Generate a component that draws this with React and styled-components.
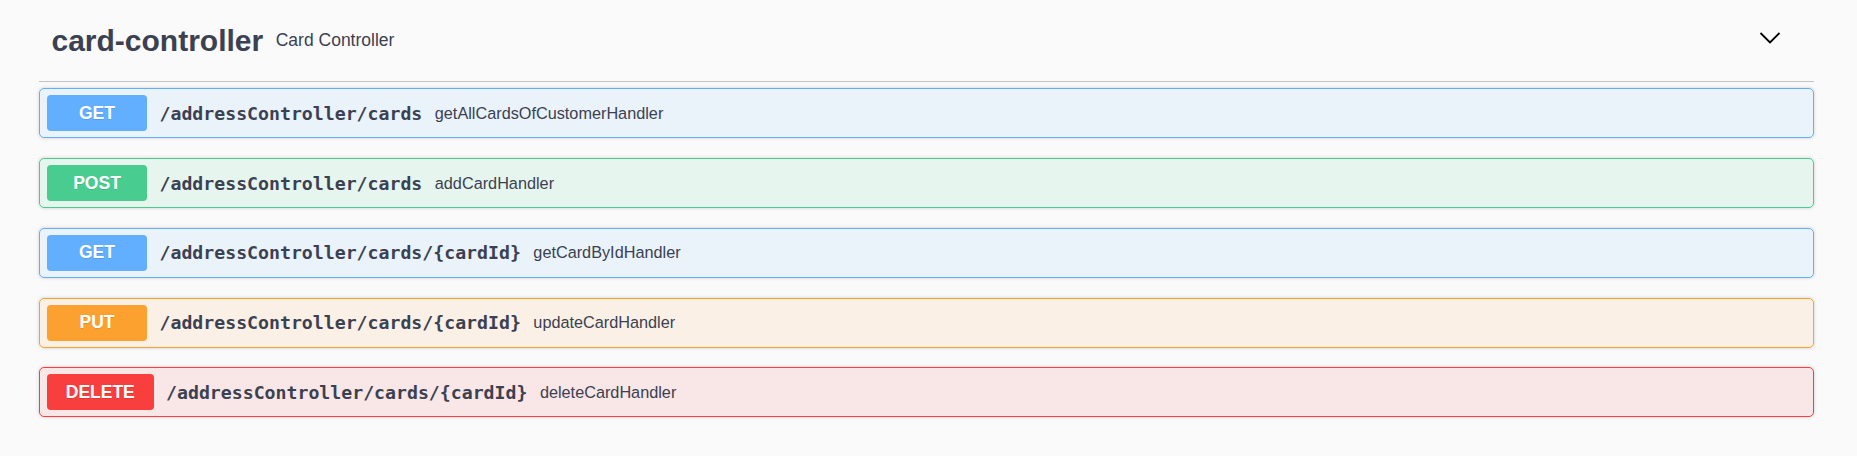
import React from 'react';
import styled, { createGlobalStyle } from 'styled-components';

const GlobalStyle = createGlobalStyle`
  html, body {
    margin: 0;
    padding: 0;
    background: #fafafa;
  }
  body {
    font-family: "Liberation Sans", Arial, sans-serif;
    color: #3b4151;
  }
`;

const METHODS = {
  get: { color: '#61affe', bg: 'rgba(97, 175, 254, 0.1)' },
  post: { color: '#49cc90', bg: 'rgba(73, 204, 144, 0.1)' },
  put: { color: '#fca130', bg: 'rgba(252, 161, 48, 0.1)' },
  delete: { color: '#f93e3e', bg: 'rgba(249, 62, 62, 0.1)' },
};

const Section = styled.section`
  padding: 0 43px 0 39px;
`;

const TagHeader = styled.h3`
  display: flex;
  align-items: center;
  box-sizing: border-box;
  height: 82px;
  margin: 0 0 6.25px;
  padding: 0 32px 0 12.5px;
  border-bottom: 1px solid rgba(59, 65, 81, 0.3);
  cursor: pointer;
`;

const TagName = styled.span`
  font-family: "Liberation Sans", Arial, sans-serif;
  font-size: 30px;
  font-weight: 700;
  color: #3b4151;
`;

const TagDescription = styled.small`
  flex: 1;
  padding: 0 12.5px;
  font-family: "Liberation Sans", Arial, sans-serif;
  font-size: 17.5px;
  font-weight: 400;
  color: #3b4151;
`;

const ExpandButton = styled.button`
  border: none;
  background: none;
  padding: 0;
  margin: 0 0 5px;
  display: flex;
  cursor: pointer;
`;

const Operation = styled.div`
  display: flex;
  align-items: center;
  box-sizing: border-box;
  height: 50px;
  margin: 0 0 19.75px;
  padding: 6px 7px;
  border: 1px solid ${(p) => METHODS[p.$method].color};
  border-radius: 5px;
  background: ${(p) => METHODS[p.$method].bg};
  box-shadow: 0 0 3.75px rgba(0, 0, 0, 0.19);
  cursor: pointer;
`;

const MethodBadge = styled.span`
  box-sizing: border-box;
  min-width: 100px;
  padding: 7.5px 18.75px;
  line-height: 21px;
  text-align: center;
  border-radius: 3.75px;
  background: ${(p) => METHODS[p.$method].color};
  color: #fff;
  font-family: "Liberation Sans", Arial, sans-serif;
  font-size: 17.5px;
  font-weight: 700;
  text-shadow: 0 1px 0 rgba(0, 0, 0, 0.1);
`;

const Path = styled.span`
  display: flex;
  align-items: center;
  padding: 0 12.5px;
  font-family: "DejaVu Sans Mono", "Liberation Mono", monospace;
  font-size: 18.2px;
  font-weight: 700;
  color: #3b4151;
`;

const Summary = styled.span`
  flex: 1 1 auto;
  font-family: "Liberation Sans", Arial, sans-serif;
  font-size: 16.25px;
  color: #3b4151;
`;

const operations = [
  { method: 'get', path: '/addressController/cards', summary: 'getAllCardsOfCustomerHandler' },
  { method: 'post', path: '/addressController/cards', summary: 'addCardHandler' },
  { method: 'get', path: '/addressController/cards/{cardId}', summary: 'getCardByIdHandler' },
  { method: 'put', path: '/addressController/cards/{cardId}', summary: 'updateCardHandler' },
  { method: 'delete', path: '/addressController/cards/{cardId}', summary: 'deleteCardHandler' },
];

const Chevron = () => (
  <svg width="24" height="14" viewBox="0 0 24 14">
    <polyline points="2.5,2 12,11.5 21.5,2" fill="none" stroke="#000" strokeWidth="1.8" />
  </svg>
);

export default function App() {
  return (
    <>
      <GlobalStyle />
      <Section>
        <TagHeader>
          <TagName>card-controller</TagName>
          <TagDescription>Card Controller</TagDescription>
          <ExpandButton aria-label="collapse">
            <Chevron />
          </ExpandButton>
        </TagHeader>
        {operations.map((op, i) => (
          <Operation key={i} $method={op.method}>
            <MethodBadge $method={op.method}>{op.method.toUpperCase()}</MethodBadge>
            <Path>{op.path}</Path>
            <Summary>{op.summary}</Summary>
          </Operation>
        ))}
      </Section>
    </>
  );
}
